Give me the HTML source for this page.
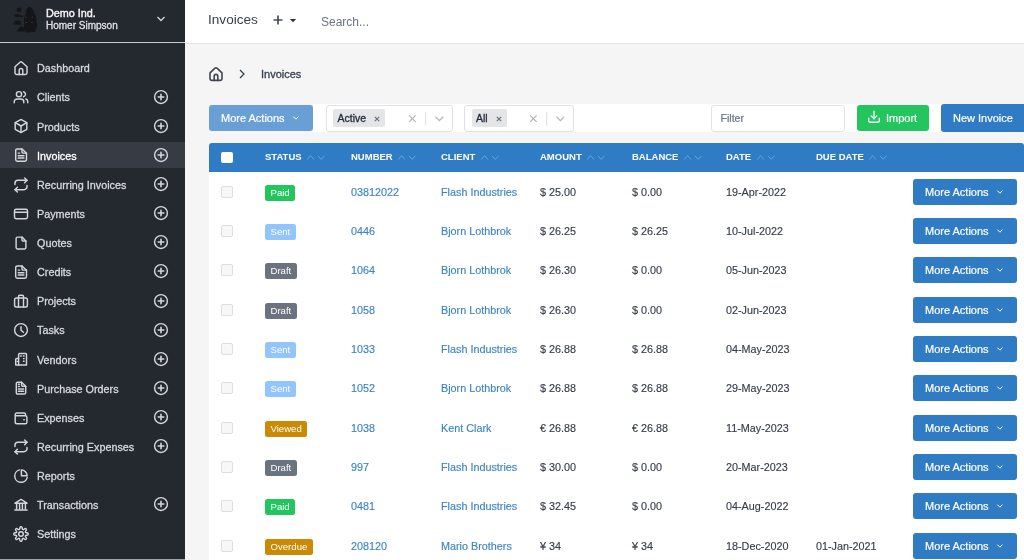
<!DOCTYPE html>
<html><head><meta charset="utf-8">
<style>
*{box-sizing:border-box;margin:0;padding:0}
html,body{-webkit-font-smoothing:antialiased;width:1024px;height:560px;overflow:hidden;background:#f5f5f5;font-family:"Liberation Sans",sans-serif;}
#side{position:absolute;left:0;top:0;width:185px;height:560px;background:#242930;color:#e5e7eb;z-index:2}
#side .hd{position:absolute;left:0;top:0;width:185px;height:43px;border-bottom:1px solid #c9ccd1}
#side .logo{position:absolute;left:10px;top:4px}
#side .org{position:absolute;left:46px;top:6.9px;color:#f3f4f6;line-height:12.4px}
#side .o1{font-size:10.8px;-webkit-text-stroke:0.4px #f3f4f6}
#side .o2{font-size:10px;margin-top:1.1px;color:#dcdee2;-webkit-text-stroke:0.35px #dcdee2}
#side .chev{position:absolute;left:155px;top:14px}
.item{position:absolute;left:0;width:185px;height:26px;}
.item.act{background:#363b44}
.item svg.ic{position:absolute;left:13px;top:5px}
.item .t{position:absolute;left:37px;top:7.3px;font-size:10.8px;line-height:12px;color:#d5d8dd;-webkit-text-stroke:0.3px #d5d8dd}
.item svg.pl{position:absolute;left:153.2px;top:4.6px}
#top{position:absolute;left:185px;top:0;width:839px;height:44px;background:#fff;border-bottom:1px solid #e3e4e6}
#top .ttl{position:absolute;left:23px;top:12px;font-size:13.6px;color:#374151}
#top .plus{position:absolute;left:88px;top:13px}
#top .srch{position:absolute;left:136px;top:15px;font-size:12px;color:#6b7280}
#main{position:absolute;left:0;top:0;width:1024px;height:560px}
.bhome{position:absolute;left:208px;top:65.5px}
.bchev{position:absolute;left:238px;top:69px}
.bc{position:absolute;left:261px;top:68px;font-size:11px;color:#374151;-webkit-text-stroke:0.3px #374151}
.band{position:absolute;left:313px;top:104px;width:711px;height:28px;background:#fff}
.mab{position:absolute;left:209px;top:105px;width:104px;height:26px;border-radius:3px;background:#6a9fd6;color:#fff;font-size:11px;line-height:27px;padding-left:12px;-webkit-text-stroke:0.2px #fff}
.mab svg{position:absolute;left:291px;left:83px;top:10px}
.sel{position:absolute;top:104.5px;height:27px;border:1px solid #dfe1e4;border-radius:3px;background:#fff}
.s1{left:325.5px;width:127.5px}
.s2{left:464px;width:110px}
.chip{position:absolute;left:6.5px;top:3.4px;height:18.4px;background:#e4e5e7;border-radius:2px;font-size:10.5px;color:#1f2937;line-height:18.4px;padding:0 5px 0 4.5px;-webkit-text-stroke:0.3px #1f2937}
.chip .x{color:#6b7280;font-weight:normal;font-size:11px;margin-left:2px}
.s1 .sx{position:absolute;right:-1px;top:-1px}
.s2 .sx{position:absolute;right:-1px;top:-1px}
.filter{position:absolute;left:710.5px;top:104.5px;width:134px;height:27px;border:1px solid #e1e3e6;border-radius:3px;background:#fff;font-size:10.6px;color:#6b7280;line-height:25px;padding-left:9px;-webkit-text-stroke:0.2px #6b7280}
.imp{position:absolute;left:857px;top:105px;width:72px;height:26px;border-radius:3px;background:#22c55e;color:#fff;font-size:11px;line-height:27px;padding-left:10px;-webkit-text-stroke:0.2px #fff}
.imp svg{vertical-align:-2px;margin-right:5px}
.newinv{position:absolute;left:941px;top:104px;width:90px;height:28px;border-radius:3px;background:#2f7bc4;color:#fff;font-size:11px;line-height:29px;padding-left:12px;-webkit-text-stroke:0.2px #fff}
.table{position:absolute;left:209px;top:143px;width:815px;height:417px;background:#fff;border-radius:3px 3px 0 0}
.thead{position:absolute;left:0;top:0;width:815px;height:29px;background:#2f7bc4;border-radius:3px 3px 0 0}
.hcb{position:absolute;left:12px;top:9px;width:12px;height:11px;background:#fff;border-radius:2px}
.h{position:absolute;top:9px;font-size:9.5px;font-weight:bold;color:#fff;line-height:10px;height:10px;white-space:nowrap}
.h .sa{margin-left:4.5px;vertical-align:top;position:relative;top:0.8px}
.row{position:absolute;left:0;width:815px;height:39.33px}
.row .cb{position:absolute;left:12px;top:13.5px;width:12px;height:12px;border:1px solid #dcdee2;border-radius:2px;background:#f7f7f8}
.badge{position:absolute;left:56px;top:12.5px;height:16.3px;border-radius:2.5px;color:#fff;font-size:9.6px;line-height:16.5px;padding:0 5.5px}
.c{position:absolute;top:13.5px;font-size:10.8px;line-height:13px;white-space:nowrap;color:#363d48;-webkit-text-stroke:0.15px #363d48}
.num{left:142px;color:#3d84c6;-webkit-text-stroke:0.15px #3d84c6}
.cl{left:232px;color:#3d84c6;-webkit-text-stroke:0.15px #3d84c6}
.am{left:331px}
.bal{left:423px}
.dt{left:517px}
.due{left:607px}
.ma{position:absolute;left:704px;top:6.5px;width:104px;height:26px;border-radius:3px;background:#2f7bc4;color:#fff;font-size:11px;line-height:27px;padding-left:12px;-webkit-text-stroke:0.2px #fff}
.ma svg{position:absolute;left:83px;top:10px}

.chip .cx{margin-left:8px;vertical-align:0px}
.sel .sx{position:absolute;right:-1px;top:-1px}
.sbot{position:absolute;left:0;top:559px;width:185px;height:1px;background:#9ea1a6}
.item.act .t{color:#fff;-webkit-text-stroke:0.3px #fff}
#side,#top,#main{will-change:transform}
</style></head><body>
<div id="side">
  <div class="hd">
    <svg class="logo" width="32" height="32" viewBox="0 0 32 32"><g fill="#131519"><path d="M19.5 3 Q22 3 23 6 L24.5 10 Q27 12 26.5 15 L26 17 Q27.5 19 27 22 Q27 24 25 25 L23 26 L15 26 Q13.5 24 14 21 L14 17 Q13.5 13 15.5 10 L16.5 6 Q17 3 19.5 3 Z"/><circle cx="9" cy="5.8" r="2.4"/><path d="M3.8 11 L8 9.8 L10 11.2 L13.5 11.8 L12.5 13.2 L8 12.8 L6 13.4 Z"/><path d="M3.2 20.5 Q5 15.8 8.2 16.4 Q10.8 17 11.6 20.5 Z"/><path d="M7 27.5 Q9 22.2 12.5 22.8 Q15 23.5 15.5 27.5 Z"/><path d="M15 27.5 Q18 24 21 25 Q24 23 26 25.5 L25 28 L16 28.5 Z"/></g><g fill="#2c3038"><rect x="15" y="12.5" width="1.5" height="1.2"/><rect x="21.5" y="12.5" width="1.5" height="1.2"/><rect x="15" y="18" width="2" height="1"/><rect x="21" y="18" width="2" height="1"/></g></svg>
    <div class="org"><div class="o1">Demo Ind.</div><div class="o2">Homer Simpson</div></div>
    <svg class="chev" width="12" height="10" viewBox="0 0 12 10"><path d="M2.5 3 L6 6.5 L9.5 3" fill="none" stroke="#d1d5db" stroke-width="1.3"/></svg>
  </div>
  <div class="item" style="top:55.00px"><svg class="ic" width="16" height="16" viewBox="0 0 16 16" stroke="#d3d6db" stroke-width="1.45" fill="none" stroke-linecap="round" stroke-linejoin="round"><path d="M2 6.8 L7 2.2 a1.5 1.5 0 0 1 2 0 L14 6.8 V12.8 a1.6 1.6 0 0 1 -1.6 1.6 H3.6 a1.6 1.6 0 0 1 -1.6 -1.6 Z"/><path d="M6.2 14.4 V10.2 a1.8 1.8 0 0 1 3.6 0 V14.4"/></svg><div class="t">Dashboard</div></div><div class="item" style="top:84.12px"><svg class="ic" width="16" height="16" viewBox="0 0 16 16" stroke="#d3d6db" stroke-width="1.45" fill="none" stroke-linecap="round" stroke-linejoin="round"><circle cx="6" cy="5.2" r="2.6"/><path d="M1.2 13.8 v-0.9 a3 3 0 0 1 3-3 h3.6 a3 3 0 0 1 3 3 v0.9"/><path d="M10.6 2.7 a2.6 2.6 0 0 1 0 5"/><path d="M12.8 10 a3 3 0 0 1 2 2.9 v0.9"/></svg><div class="t">Clients</div><svg class="pl" width="16" height="16" viewBox="0 0 16 16" stroke="#d3d6db" stroke-width="1.45" fill="none" stroke-linecap="round" stroke-linejoin="round"><circle cx="8" cy="8" r="6.4"/><path d="M8 5.2 V10.8 M5.2 8 H10.8" stroke-width="1.6"/></svg></div><div class="item" style="top:113.25px"><svg class="ic" width="16" height="16" viewBox="0 0 16 16" stroke="#d3d6db" stroke-width="1.45" fill="none" stroke-linecap="round" stroke-linejoin="round"><path d="M7.3 1.8 a1.4 1.4 0 0 1 1.4 0 L13.8 4.7 V11.3 L8.7 14.2 a1.4 1.4 0 0 1 -1.4 0 L2.2 11.3 V4.7 Z"/><path d="M2.2 4.7 L8 8 L13.8 4.7"/><path d="M8 8 V14.4"/></svg><div class="t">Products</div><svg class="pl" width="16" height="16" viewBox="0 0 16 16" stroke="#d3d6db" stroke-width="1.45" fill="none" stroke-linecap="round" stroke-linejoin="round"><circle cx="8" cy="8" r="6.4"/><path d="M8 5.2 V10.8 M5.2 8 H10.8" stroke-width="1.6"/></svg></div><div class="item act" style="top:142.38px"><svg class="ic" width="16" height="16" viewBox="0 0 16 16" stroke="#d3d6db" stroke-width="1.45" fill="none" stroke-linecap="round" stroke-linejoin="round"><path d="M9 1.9 H4.3 a1.6 1.6 0 0 0 -1.6 1.6 V12.6 a1.6 1.6 0 0 0 1.6 1.6 H11.9 a1.6 1.6 0 0 0 1.6 -1.6 V6.2 Z"/><path d="M9 1.9 V4.9 a1.2 1.2 0 0 0 1.2 1.2 H13.5"/><path d="M5.3 8.7 H10.9 M5.3 10.9 H10.9 M5.3 6.1 H6.6"/></svg><div class="t">Invoices</div><svg class="pl" width="16" height="16" viewBox="0 0 16 16" stroke="#d3d6db" stroke-width="1.45" fill="none" stroke-linecap="round" stroke-linejoin="round"><circle cx="8" cy="8" r="6.4"/><path d="M8 5.2 V10.8 M5.2 8 H10.8" stroke-width="1.6"/></svg></div><div class="item" style="top:171.50px"><svg class="ic" width="16" height="16" viewBox="0 0 16 16" stroke="#d3d6db" stroke-width="1.45" fill="none" stroke-linecap="round" stroke-linejoin="round"><path d="M11.6 0.9 L14 3.3 L11.6 5.7"/><path d="M2 7.6 V6.3 a3 3 0 0 1 3-3 H14"/><path d="M4.4 15.1 L2 12.7 L4.4 10.3"/><path d="M14 8.4 V9.7 a3 3 0 0 1 -3 3 H2"/></svg><div class="t">Recurring Invoices</div><svg class="pl" width="16" height="16" viewBox="0 0 16 16" stroke="#d3d6db" stroke-width="1.45" fill="none" stroke-linecap="round" stroke-linejoin="round"><circle cx="8" cy="8" r="6.4"/><path d="M8 5.2 V10.8 M5.2 8 H10.8" stroke-width="1.6"/></svg></div><div class="item" style="top:200.62px"><svg class="ic" width="16" height="16" viewBox="0 0 16 16" stroke="#d3d6db" stroke-width="1.45" fill="none" stroke-linecap="round" stroke-linejoin="round"><rect x="1.5" y="3.3" width="13" height="9.4" rx="1.6"/><path d="M1.5 6.3 H14.5"/></svg><div class="t">Payments</div><svg class="pl" width="16" height="16" viewBox="0 0 16 16" stroke="#d3d6db" stroke-width="1.45" fill="none" stroke-linecap="round" stroke-linejoin="round"><circle cx="8" cy="8" r="6.4"/><path d="M8 5.2 V10.8 M5.2 8 H10.8" stroke-width="1.6"/></svg></div><div class="item" style="top:229.75px"><svg class="ic" width="16" height="16" viewBox="0 0 16 16" stroke="#d3d6db" stroke-width="1.45" fill="none" stroke-linecap="round" stroke-linejoin="round"><path d="M9 2.1 H4.6 a1.5 1.5 0 0 0 -1.5 1.5 V12.5 a1.5 1.5 0 0 0 1.5 1.5 H11.4 a1.5 1.5 0 0 0 1.5 -1.5 V6 Z"/><path d="M9 2.1 V5 a1 1 0 0 0 1 1 H12.9"/></svg><div class="t">Quotes</div><svg class="pl" width="16" height="16" viewBox="0 0 16 16" stroke="#d3d6db" stroke-width="1.45" fill="none" stroke-linecap="round" stroke-linejoin="round"><circle cx="8" cy="8" r="6.4"/><path d="M8 5.2 V10.8 M5.2 8 H10.8" stroke-width="1.6"/></svg></div><div class="item" style="top:258.88px"><svg class="ic" width="16" height="16" viewBox="0 0 16 16" stroke="#d3d6db" stroke-width="1.45" fill="none" stroke-linecap="round" stroke-linejoin="round"><path d="M9 1.9 H4.3 a1.6 1.6 0 0 0 -1.6 1.6 V12.6 a1.6 1.6 0 0 0 1.6 1.6 H11.9 a1.6 1.6 0 0 0 1.6 -1.6 V6.2 Z"/><path d="M9 1.9 V4.9 a1.2 1.2 0 0 0 1.2 1.2 H13.5"/><path d="M5.3 8.7 H10.9 M5.3 10.9 H10.9 M5.3 6.1 H6.6"/></svg><div class="t">Credits</div><svg class="pl" width="16" height="16" viewBox="0 0 16 16" stroke="#d3d6db" stroke-width="1.45" fill="none" stroke-linecap="round" stroke-linejoin="round"><circle cx="8" cy="8" r="6.4"/><path d="M8 5.2 V10.8 M5.2 8 H10.8" stroke-width="1.6"/></svg></div><div class="item" style="top:288.00px"><svg class="ic" width="16" height="16" viewBox="0 0 16 16" stroke="#d3d6db" stroke-width="1.45" fill="none" stroke-linecap="round" stroke-linejoin="round"><rect x="1.6" y="5" width="12.8" height="9" rx="1.8"/><path d="M5.5 14 V3.5 a1.2 1.2 0 0 1 1.2-1.2 H9.3 a1.2 1.2 0 0 1 1.2 1.2 V14"/></svg><div class="t">Projects</div><svg class="pl" width="16" height="16" viewBox="0 0 16 16" stroke="#d3d6db" stroke-width="1.45" fill="none" stroke-linecap="round" stroke-linejoin="round"><circle cx="8" cy="8" r="6.4"/><path d="M8 5.2 V10.8 M5.2 8 H10.8" stroke-width="1.6"/></svg></div><div class="item" style="top:317.12px"><svg class="ic" width="16" height="16" viewBox="0 0 16 16" stroke="#d3d6db" stroke-width="1.45" fill="none" stroke-linecap="round" stroke-linejoin="round"><circle cx="8" cy="8" r="6.4"/><path d="M8 4.6 V8.2 L10.4 10.2"/></svg><div class="t">Tasks</div><svg class="pl" width="16" height="16" viewBox="0 0 16 16" stroke="#d3d6db" stroke-width="1.45" fill="none" stroke-linecap="round" stroke-linejoin="round"><circle cx="8" cy="8" r="6.4"/><path d="M8 5.2 V10.8 M5.2 8 H10.8" stroke-width="1.6"/></svg></div><div class="item" style="top:346.25px"><svg class="ic" width="16" height="16" viewBox="0 0 16 16" stroke="#d3d6db" stroke-width="1.45" fill="none" stroke-linecap="round" stroke-linejoin="round"><path d="M5.6 14 V3.4 a0.9 0.9 0 0 1 0.9-0.9 H12.6 a0.9 0.9 0 0 1 0.9 0.9 V14 Z"/><path d="M5.6 7.5 H3.6 a0.9 0.9 0 0 0 -0.9 0.9 V14 H5.6"/><path d="M7.6 5 H8.3 M10.4 5 H11.1 M10.4 7.6 H11.1 M10.4 10.2 H11.1 M4.2 10.4 H4.5"/></svg><div class="t">Vendors</div><svg class="pl" width="16" height="16" viewBox="0 0 16 16" stroke="#d3d6db" stroke-width="1.45" fill="none" stroke-linecap="round" stroke-linejoin="round"><circle cx="8" cy="8" r="6.4"/><path d="M8 5.2 V10.8 M5.2 8 H10.8" stroke-width="1.6"/></svg></div><div class="item" style="top:375.38px"><svg class="ic" width="16" height="16" viewBox="0 0 16 16" stroke="#d3d6db" stroke-width="1.45" fill="none" stroke-linecap="round" stroke-linejoin="round"><path d="M8.6 2.2 H4.6 a1.3 1.3 0 0 0 -1.3 1.3 V12.7 a1.3 1.3 0 0 0 1.3 1.3 H11.4 a1.3 1.3 0 0 0 1.3 -1.3 V6.3 Z"/><path d="M8.6 2.2 V5.3 a1 1 0 0 0 1 1 H12.7"/><path d="M5.4 8.9 H10.6 M5.4 11.2 H10.6 M5.4 4.2 H6.4 M5.4 6.4 H6.4"/></svg><div class="t">Purchase Orders</div><svg class="pl" width="16" height="16" viewBox="0 0 16 16" stroke="#d3d6db" stroke-width="1.45" fill="none" stroke-linecap="round" stroke-linejoin="round"><circle cx="8" cy="8" r="6.4"/><path d="M8 5.2 V10.8 M5.2 8 H10.8" stroke-width="1.6"/></svg></div><div class="item" style="top:404.50px"><svg class="ic" width="16" height="16" viewBox="0 0 16 16" stroke="#d3d6db" stroke-width="1.45" fill="none" stroke-linecap="round" stroke-linejoin="round"><path d="M12.6 5.8 V4.6 a1.6 1.6 0 0 0 -1.6 -1.6 H3.8 a1.6 1.6 0 0 0 -1.6 1.6 V12 a1.8 1.8 0 0 0 1.8 1.8 H12.3 a1.6 1.6 0 0 0 1.6 -1.6 V7.4 a1.6 1.6 0 0 0 -1.6 -1.6 H2.4"/><path d="M10.8 9.8 H11.3"/></svg><div class="t">Expenses</div><svg class="pl" width="16" height="16" viewBox="0 0 16 16" stroke="#d3d6db" stroke-width="1.45" fill="none" stroke-linecap="round" stroke-linejoin="round"><circle cx="8" cy="8" r="6.4"/><path d="M8 5.2 V10.8 M5.2 8 H10.8" stroke-width="1.6"/></svg></div><div class="item" style="top:433.62px"><svg class="ic" width="16" height="16" viewBox="0 0 16 16" stroke="#d3d6db" stroke-width="1.45" fill="none" stroke-linecap="round" stroke-linejoin="round"><path d="M11.6 0.9 L14 3.3 L11.6 5.7"/><path d="M2 7.6 V6.3 a3 3 0 0 1 3-3 H14"/><path d="M4.4 15.1 L2 12.7 L4.4 10.3"/><path d="M14 8.4 V9.7 a3 3 0 0 1 -3 3 H2"/></svg><div class="t">Recurring Expenses</div><svg class="pl" width="16" height="16" viewBox="0 0 16 16" stroke="#d3d6db" stroke-width="1.45" fill="none" stroke-linecap="round" stroke-linejoin="round"><circle cx="8" cy="8" r="6.4"/><path d="M8 5.2 V10.8 M5.2 8 H10.8" stroke-width="1.6"/></svg></div><div class="item" style="top:462.75px"><svg class="ic" width="16" height="16" viewBox="0 0 16 16" stroke="#d3d6db" stroke-width="1.45" fill="none" stroke-linecap="round" stroke-linejoin="round"><path d="M6.6 1.9 A6.3 6.3 0 1 0 14.2 9.4"/><path d="M8.4 1.9 A6 6 0 0 1 14.2 7.7 H8.4 Z"/></svg><div class="t">Reports</div></div><div class="item" style="top:491.88px"><svg class="ic" width="16" height="16" viewBox="0 0 16 16" stroke="#d3d6db" stroke-width="1.45" fill="none" stroke-linecap="round" stroke-linejoin="round"><path d="M2 6.2 L8 2.4 L14 6.2 Z"/><path d="M3.6 6.8 V12 M6.6 6.8 V12 M9.4 6.8 V12 M12.4 6.8 V12"/><path d="M1.9 13 H14.1"/></svg><div class="t">Transactions</div><svg class="pl" width="16" height="16" viewBox="0 0 16 16" stroke="#d3d6db" stroke-width="1.45" fill="none" stroke-linecap="round" stroke-linejoin="round"><circle cx="8" cy="8" r="6.4"/><path d="M8 5.2 V10.8 M5.2 8 H10.8" stroke-width="1.6"/></svg></div><div class="item" style="top:521.00px"><svg class="ic" width="16" height="16" viewBox="0 0 16 16" stroke="#d3d6db" stroke-width="1.45" fill="none" stroke-linecap="round" stroke-linejoin="round"><path d="M12.43 9.84 L12.37 10.02 L12.35 10.22 L12.40 10.46 L12.61 10.82 L12.99 11.33 L13.34 11.88 L13.46 12.31 L13.41 12.62 L13.28 12.88 L13.09 13.09 L12.88 13.28 L12.62 13.41 L12.31 13.46 L11.88 13.34 L11.33 12.99 L10.82 12.61 L10.46 12.40 L10.22 12.35 L10.02 12.37 L9.84 12.43 L9.67 12.52 L9.51 12.64 L9.37 12.85 L9.26 13.25 L9.17 13.88 L9.03 14.51 L8.82 14.91 L8.56 15.10 L8.28 15.18 L8.00 15.20 L7.72 15.18 L7.44 15.10 L7.18 14.91 L6.97 14.51 L6.83 13.88 L6.74 13.25 L6.63 12.85 L6.49 12.64 L6.33 12.52 L6.16 12.43 L5.98 12.37 L5.78 12.35 L5.54 12.40 L5.18 12.61 L4.67 12.99 L4.12 13.34 L3.69 13.46 L3.38 13.41 L3.12 13.28 L2.91 13.09 L2.72 12.88 L2.59 12.62 L2.54 12.31 L2.66 11.88 L3.01 11.33 L3.39 10.82 L3.60 10.46 L3.65 10.22 L3.63 10.02 L3.57 9.84 L3.48 9.67 L3.36 9.51 L3.15 9.37 L2.75 9.26 L2.12 9.17 L1.49 9.03 L1.09 8.82 L0.90 8.56 L0.82 8.28 L0.80 8.00 L0.82 7.72 L0.90 7.44 L1.09 7.18 L1.49 6.97 L2.12 6.83 L2.75 6.74 L3.15 6.63 L3.36 6.49 L3.48 6.33 L3.57 6.16 L3.63 5.98 L3.65 5.78 L3.60 5.54 L3.39 5.18 L3.01 4.67 L2.66 4.12 L2.54 3.69 L2.59 3.38 L2.72 3.12 L2.91 2.91 L3.12 2.72 L3.38 2.59 L3.69 2.54 L4.12 2.66 L4.67 3.01 L5.18 3.39 L5.54 3.60 L5.78 3.65 L5.98 3.63 L6.16 3.57 L6.33 3.48 L6.49 3.36 L6.63 3.15 L6.74 2.75 L6.83 2.12 L6.97 1.49 L7.18 1.09 L7.44 0.90 L7.72 0.82 L8.00 0.80 L8.28 0.82 L8.56 0.90 L8.82 1.09 L9.03 1.49 L9.17 2.12 L9.26 2.75 L9.37 3.15 L9.51 3.36 L9.67 3.48 L9.84 3.57 L10.02 3.63 L10.22 3.65 L10.46 3.60 L10.82 3.39 L11.33 3.01 L11.88 2.66 L12.31 2.54 L12.62 2.59 L12.88 2.72 L13.09 2.91 L13.28 3.12 L13.41 3.38 L13.46 3.69 L13.34 4.12 L12.99 4.67 L12.61 5.18 L12.40 5.54 L12.35 5.78 L12.37 5.98 L12.43 6.16 L12.52 6.33 L12.64 6.49 L12.85 6.63 L13.25 6.74 L13.88 6.83 L14.51 6.97 L14.91 7.18 L15.10 7.44 L15.18 7.72 L15.20 8.00 L15.18 8.28 L15.10 8.56 L14.91 8.82 L14.51 9.03 L13.88 9.17 L13.25 9.26 L12.85 9.37 L12.64 9.51 L12.52 9.67 Z"/><circle cx="8" cy="8" r="2.3"/></svg><div class="t">Settings</div></div>
  <div class="sbot"></div>
</div>
<div id="top">
  <div class="ttl">Invoices</div>
  <svg class="plus" width="26" height="14" viewBox="0 0 26 14"><path d="M5 2.5 V11.5 M0.5 7 H9.5" stroke="#454b57" stroke-width="1.7"/><path d="M16.8 5.9 L23.2 5.9 L20 9.2 Z" fill="#2f3540"/></svg>
  <div class="srch">Search...</div>
</div>
<div id="main">
  <svg class="bhome" width="16" height="16" viewBox="0 0 16 16" stroke="#3f4652" stroke-width="1.6" fill="none" stroke-linecap="round" stroke-linejoin="round"><path d="M2 6.8 L7 2.2 a1.5 1.5 0 0 1 2 0 L14 6.8 V12.8 a1.6 1.6 0 0 1 -1.6 1.6 H3.6 a1.6 1.6 0 0 1 -1.6 -1.6 Z"/><path d="M6.2 14.4 V10.2 a1.8 1.8 0 0 1 3.6 0 V14.4"/></svg>
  <svg class="bchev" width="8" height="10" viewBox="0 0 8 10"><path d="M2 1 L6 5 L2 9" fill="none" stroke="#374151" stroke-width="1.3"/></svg>
  <div class="bc">Invoices</div>
  <div class="band"></div>
  <div class="mab">More Actions <svg width="8" height="6" viewBox="0 0 8 6"><path d="M1.3 1.6 L3.9 4.2 L6.5 1.6" fill="none" stroke="#fff" stroke-width="1"/></svg></div>
  <div class="sel s1"><div class="chip">Active<svg class="cx" width="6" height="6" viewBox="0 0 6 6"><path d="M0.8 0.8 L5.2 5.2 M5.2 0.8 L0.8 5.2" stroke="#6b7280" stroke-width="1.2"/></svg></div><svg class="sx" width="52" height="27" viewBox="0 0 52 27"><path d="M8.1 10.4 L14.6 16.9 M14.6 10.4 L8.1 16.9" stroke="#b3b6bb" stroke-width="1.3"/><path d="M24.7 6.8 V20.4" stroke="#dcdee1" stroke-width="1"/><path d="M34.5 11.7 L38.35 15.6 L42.2 11.7" fill="none" stroke="#b3b6bb" stroke-width="1.3"/></svg></div>
  <div class="sel s2"><div class="chip">All<svg class="cx" width="6" height="6" viewBox="0 0 6 6"><path d="M0.8 0.8 L5.2 5.2 M5.2 0.8 L0.8 5.2" stroke="#6b7280" stroke-width="1.2"/></svg></div><svg class="sx" width="52" height="27" viewBox="0 0 52 27"><path d="M8.1 10.4 L14.6 16.9 M14.6 10.4 L8.1 16.9" stroke="#b3b6bb" stroke-width="1.3"/><path d="M24.7 6.8 V20.4" stroke="#dcdee1" stroke-width="1"/><path d="M34.5 11.7 L38.35 15.6 L42.2 11.7" fill="none" stroke="#b3b6bb" stroke-width="1.3"/></svg></div>
  <div class="filter">Filter</div>
  <div class="imp"><svg width="14" height="14" viewBox="0 0 24 24" stroke="#fff" stroke-width="2.2" fill="none" stroke-linecap="round" stroke-linejoin="round"><path d="M3 14v5a2 2 0 0 0 2 2h14a2 2 0 0 0 2-2v-5"/><path d="M7 10l5 5 5-5"/><path d="M12 15V2"/></svg>Import</div>
  <div class="newinv">New Invoice</div>
  <div class="table">
    <div class="thead"><div class="hcb"></div><div class="h" style="left:56px">STATUS<svg class="sa" width="20" height="9" viewBox="0 0 20 9"><path d="M1.2 6.6 L4.6 2.6 L8 6.6 M12 2.8 L15.2 6.4 L18.4 2.8" fill="none" stroke="#6aa3dc" stroke-width="1"/></svg></div><div class="h" style="left:142px">NUMBER<svg class="sa" width="20" height="9" viewBox="0 0 20 9"><path d="M1.2 6.6 L4.6 2.6 L8 6.6 M12 2.8 L15.2 6.4 L18.4 2.8" fill="none" stroke="#6aa3dc" stroke-width="1"/></svg></div><div class="h" style="left:232px">CLIENT<svg class="sa" width="20" height="9" viewBox="0 0 20 9"><path d="M1.2 6.6 L4.6 2.6 L8 6.6 M12 2.8 L15.2 6.4 L18.4 2.8" fill="none" stroke="#6aa3dc" stroke-width="1"/></svg></div><div class="h" style="left:331px">AMOUNT<svg class="sa" width="20" height="9" viewBox="0 0 20 9"><path d="M1.2 6.6 L4.6 2.6 L8 6.6 M12 2.8 L15.2 6.4 L18.4 2.8" fill="none" stroke="#6aa3dc" stroke-width="1"/></svg></div><div class="h" style="left:423px">BALANCE<svg class="sa" width="20" height="9" viewBox="0 0 20 9"><path d="M1.2 6.6 L4.6 2.6 L8 6.6 M12 2.8 L15.2 6.4 L18.4 2.8" fill="none" stroke="#6aa3dc" stroke-width="1"/></svg></div><div class="h" style="left:517px">DATE<svg class="sa" width="20" height="9" viewBox="0 0 20 9"><path d="M1.2 6.6 L4.6 2.6 L8 6.6 M12 2.8 L15.2 6.4 L18.4 2.8" fill="none" stroke="#6aa3dc" stroke-width="1"/></svg></div><div class="h" style="left:607px">DUE DATE<svg class="sa" width="20" height="9" viewBox="0 0 20 9"><path d="M1.2 6.6 L4.6 2.6 L8 6.6 M12 2.8 L15.2 6.4 L18.4 2.8" fill="none" stroke="#6aa3dc" stroke-width="1"/></svg></div></div>
    <div class="row" style="top:29.03px">
<div class="cb"></div>
<div class="badge" style="background:#22c55e">Paid</div>
<div class="c num">03812022</div><div class="c cl">Flash Industries</div><div class="c am">$ 25.00</div><div class="c bal">$ 0.00</div><div class="c dt">19-Apr-2022</div><div class="c due"></div>
<div class="ma">More Actions <svg width="8" height="6" viewBox="0 0 8 6"><path d="M1.3 1.6 L3.9 4.2 L6.5 1.6" fill="none" stroke="#fff" stroke-width="1"/></svg></div>
</div><div class="row" style="top:68.36px">
<div class="cb"></div>
<div class="badge" style="background:#93c5fd">Sent</div>
<div class="c num">0446</div><div class="c cl">Bjorn Lothbrok</div><div class="c am">$ 26.25</div><div class="c bal">$ 26.25</div><div class="c dt">10-Jul-2022</div><div class="c due"></div>
<div class="ma">More Actions <svg width="8" height="6" viewBox="0 0 8 6"><path d="M1.3 1.6 L3.9 4.2 L6.5 1.6" fill="none" stroke="#fff" stroke-width="1"/></svg></div>
</div><div class="row" style="top:107.69px">
<div class="cb"></div>
<div class="badge" style="background:#6b7280">Draft</div>
<div class="c num">1064</div><div class="c cl">Bjorn Lothbrok</div><div class="c am">$ 26.30</div><div class="c bal">$ 0.00</div><div class="c dt">05-Jun-2023</div><div class="c due"></div>
<div class="ma">More Actions <svg width="8" height="6" viewBox="0 0 8 6"><path d="M1.3 1.6 L3.9 4.2 L6.5 1.6" fill="none" stroke="#fff" stroke-width="1"/></svg></div>
</div><div class="row" style="top:147.02px">
<div class="cb"></div>
<div class="badge" style="background:#6b7280">Draft</div>
<div class="c num">1058</div><div class="c cl">Bjorn Lothbrok</div><div class="c am">$ 26.30</div><div class="c bal">$ 0.00</div><div class="c dt">02-Jun-2023</div><div class="c due"></div>
<div class="ma">More Actions <svg width="8" height="6" viewBox="0 0 8 6"><path d="M1.3 1.6 L3.9 4.2 L6.5 1.6" fill="none" stroke="#fff" stroke-width="1"/></svg></div>
</div><div class="row" style="top:186.35px">
<div class="cb"></div>
<div class="badge" style="background:#93c5fd">Sent</div>
<div class="c num">1033</div><div class="c cl">Flash Industries</div><div class="c am">$ 26.88</div><div class="c bal">$ 26.88</div><div class="c dt">04-May-2023</div><div class="c due"></div>
<div class="ma">More Actions <svg width="8" height="6" viewBox="0 0 8 6"><path d="M1.3 1.6 L3.9 4.2 L6.5 1.6" fill="none" stroke="#fff" stroke-width="1"/></svg></div>
</div><div class="row" style="top:225.68px">
<div class="cb"></div>
<div class="badge" style="background:#93c5fd">Sent</div>
<div class="c num">1052</div><div class="c cl">Bjorn Lothbrok</div><div class="c am">$ 26.88</div><div class="c bal">$ 26.88</div><div class="c dt">29-May-2023</div><div class="c due"></div>
<div class="ma">More Actions <svg width="8" height="6" viewBox="0 0 8 6"><path d="M1.3 1.6 L3.9 4.2 L6.5 1.6" fill="none" stroke="#fff" stroke-width="1"/></svg></div>
</div><div class="row" style="top:265.01px">
<div class="cb"></div>
<div class="badge" style="background:#ca8a04">Viewed</div>
<div class="c num">1038</div><div class="c cl">Kent Clark</div><div class="c am">€ 26.88</div><div class="c bal">€ 26.88</div><div class="c dt">11-May-2023</div><div class="c due"></div>
<div class="ma">More Actions <svg width="8" height="6" viewBox="0 0 8 6"><path d="M1.3 1.6 L3.9 4.2 L6.5 1.6" fill="none" stroke="#fff" stroke-width="1"/></svg></div>
</div><div class="row" style="top:304.34px">
<div class="cb"></div>
<div class="badge" style="background:#6b7280">Draft</div>
<div class="c num">997</div><div class="c cl">Flash Industries</div><div class="c am">$ 30.00</div><div class="c bal">$ 0.00</div><div class="c dt">20-Mar-2023</div><div class="c due"></div>
<div class="ma">More Actions <svg width="8" height="6" viewBox="0 0 8 6"><path d="M1.3 1.6 L3.9 4.2 L6.5 1.6" fill="none" stroke="#fff" stroke-width="1"/></svg></div>
</div><div class="row" style="top:343.67px">
<div class="cb"></div>
<div class="badge" style="background:#22c55e">Paid</div>
<div class="c num">0481</div><div class="c cl">Flash Industries</div><div class="c am">$ 32.45</div><div class="c bal">$ 0.00</div><div class="c dt">04-Aug-2022</div><div class="c due"></div>
<div class="ma">More Actions <svg width="8" height="6" viewBox="0 0 8 6"><path d="M1.3 1.6 L3.9 4.2 L6.5 1.6" fill="none" stroke="#fff" stroke-width="1"/></svg></div>
</div><div class="row" style="top:383.00px">
<div class="cb"></div>
<div class="badge" style="background:#ca8a04">Overdue</div>
<div class="c num">208120</div><div class="c cl">Mario Brothers</div><div class="c am">¥ 34</div><div class="c bal">¥ 34</div><div class="c dt">18-Dec-2020</div><div class="c due">01-Jan-2021</div>
<div class="ma">More Actions <svg width="8" height="6" viewBox="0 0 8 6"><path d="M1.3 1.6 L3.9 4.2 L6.5 1.6" fill="none" stroke="#fff" stroke-width="1"/></svg></div>
</div>
  </div>
</div>
</body></html>
